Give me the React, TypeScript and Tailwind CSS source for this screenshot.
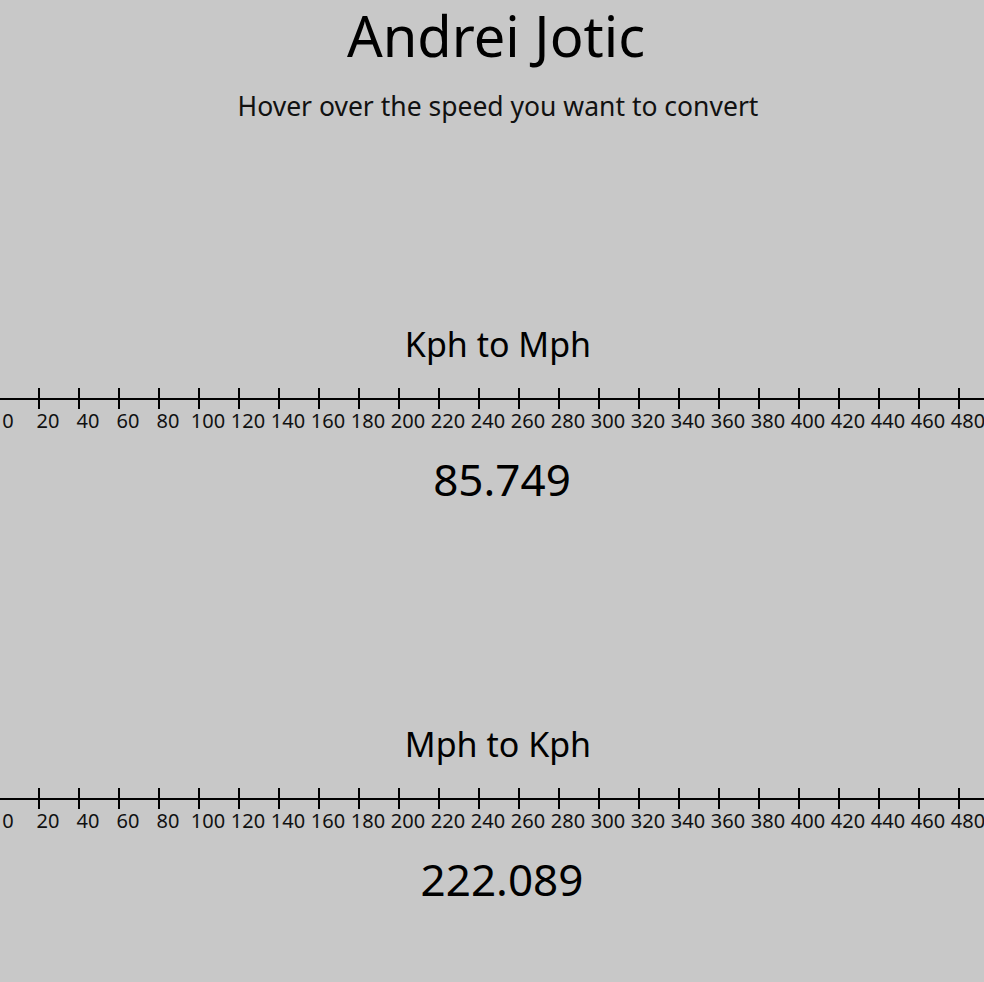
import React from "react";

const marks = Array.from({ length: 26 }, (_, i) => i * 20);

function Ruler() {
  return (
    <div className="relative overflow-hidden">
      <div className="absolute left-0 right-0 top-[10px] h-[2px] bg-black" />
      <div className="flex ml-[-12px]">
        {marks.map((v) => (
          <div key={v} className="w-[40px] shrink-0 flex flex-col">
            <div className="ml-[10px] w-[2px] h-[21px] bg-black" />
            <div className="mt-[-2px] text-center text-[20px] leading-[28px] whitespace-nowrap text-[#111]">
              {v}
            </div>
          </div>
        ))}
      </div>
    </div>
  );
}

function Section({ title, value, first }: { title: string; value: string; first?: boolean }) {
  return (
    <div className={first ? "mt-[197px]" : "mt-[212px]"}>
      <div className="text-center text-[34px] leading-[46px] pl-[12px]">{title}</div>
      <div className="mt-[21px]">
        <Ruler />
      </div>
      <div className="mt-[14px] text-center text-[44px] leading-[60px] pl-[20px]">{value}</div>
    </div>
  );
}

export default function App() {
  return (
    <div className="w-full h-[982px] overflow-hidden bg-[#c8c8c8] text-black font-['Noto_Sans',sans-serif]">
      <div className="text-center text-[56px] leading-[70px] pl-[8px]">Andrei Jotic</div>
      <div className="mt-[18px] text-center text-[26.5px] leading-[36px] pl-[12px] text-[#111]">
        Hover over the speed you want to convert
      </div>
      <Section title="Kph to Mph" value="85.749" first />
      <Section title="Mph to Kph" value="222.089" />
    </div>
  );
}
